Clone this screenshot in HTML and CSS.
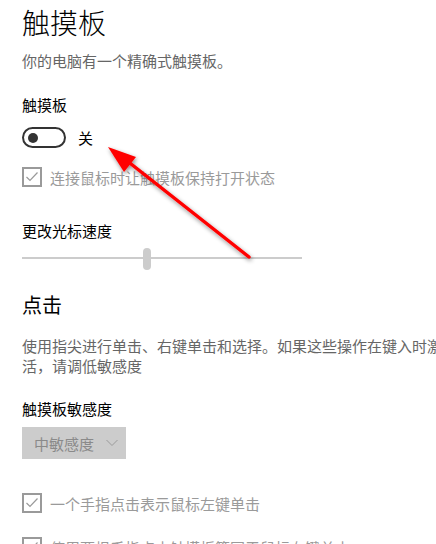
FILE: index.html
```html
<!DOCTYPE html>
<html lang="zh-CN">

<head>
    <meta charset="UTF-8">
    <meta name="viewport" content="width=device-width, initial-scale=1.0">
    <title>触摸板</title>

    <link rel="stylesheet" href="styles.css">
</head>

<body>
    <div class="page">
        <h1>触摸板</h1>
        <p class="subtitle">你的电脑有一个精确式触摸板。</p>

        <p class="label label-touchpad">触摸板</p>
        <div class="toggle-row">
            <span class="toggle"><span class="knob"></span></span>
            <span class="toggle-text">关</span>
        </div>

        <div class="check-row check-first">
            <svg class="checkbox" width="20" height="20" viewBox="0 0 20 20">
                <rect x="1" y="1" width="18" height="18" fill="none" stroke="#9a9a9a" stroke-width="2" />
                <polyline points="4.5,10 8,13.5 15.5,5.5" fill="none" stroke="#9a9a9a" stroke-width="1.2" />
            </svg>
            <span class="check-text">连接鼠标时让触摸板保持打开状态</span>
        </div>

        <p class="label label-speed">更改光标速度</p>
        <div class="slider">
            <span class="track"></span>
            <span class="thumb"></span>
        </div>

        <h2>点击</h2>
        <p class="desc">使用指尖进行单击、右键单击和选择。如果这些操作在键入时激活，请调低敏感度</p>

        <p class="label label-sens">触摸板敏感度</p>
        <div class="dropdown">
            <span>中敏感度</span>
            <svg class="chevron" width="12" height="8" viewBox="0 0 12 8">
                <polyline points="0.5,1 6,6.5 11.5,1" fill="none" stroke="#9a9a9a" stroke-width="1" />
            </svg>
        </div>

        <div class="check-row check-second">
            <svg class="checkbox" width="20" height="20" viewBox="0 0 20 20">
                <rect x="1" y="1" width="18" height="18" fill="none" stroke="#9a9a9a" stroke-width="2" />
                <polyline points="4.5,10 8,13.5 15.5,5.5" fill="none" stroke="#9a9a9a" stroke-width="1.2" />
            </svg>
            <span class="check-text">一个手指点击表示鼠标左键单击</span>
        </div>

        <div class="check-row check-third">
            <svg class="checkbox" width="20" height="20" viewBox="0 0 20 20">
                <rect x="1" y="1" width="18" height="18" fill="none" stroke="#9a9a9a" stroke-width="2" />
                <polyline points="4.5,10 8,13.5 15.5,5.5" fill="none" stroke="#9a9a9a" stroke-width="1.2" />
            </svg>
            <span class="check-text">使用两根手指点击触摸板等同于鼠标右键单击</span>
        </div>
    </div>

    <!-- red annotation arrow drawn over the screenshot -->
    <svg class="arrow" width="436" height="544" viewBox="0 0 436 544">
        <defs>
            <filter id="shadow" x="-20%" y="-20%" width="140%" height="140%">
                <feDropShadow dx="1" dy="2" stdDeviation="2" flood-color="#000" flood-opacity="0.45" />
            </filter>
        </defs>
        <g filter="url(#shadow)">
            <line x1="249" y1="257" x2="126" y2="160" stroke="#ff0000" stroke-width="3.5" stroke-linecap="round" />
            <polygon points="108,147 136,157 124,172" fill="#ff0000" />
        </g>
    </svg>
</body>

</html>
```

FILE: styles.css
```css
body {
    font-family: "Noto Sans CJK SC", "Noto Sans", sans-serif;
    margin: 0;
    padding: 0;
    background-color: #fff;
    color: #000;
    overflow: hidden;
    width: 436px;
    height: 544px;
    position: relative;
}

.page {
    padding-left: 22px;
    width: 430px;
}

h1 {
    font-size: 28px;
    font-weight: 300;
    line-height: 36px;
    margin: 4px 0 0;
}

h2 {
    font-size: 20px;
    font-weight: 400;
    line-height: 28px;
    margin: 21px 0 0;
}

p {
    margin: 0;
}

.subtitle {
    font-size: 15px;
    line-height: 20px;
    color: #666;
    margin-top: 11px;
}

.label {
    font-size: 15px;
    line-height: 20px;
}

.label-touchpad {
    margin-top: 24px;
}

.label-speed {
    margin-top: 34px;
}

.label-sens {
    margin-top: 23px;
}

.toggle-row {
    display: flex;
    align-items: center;
    gap: 12px;
    margin-top: 12px;
    height: 21px;
}

.toggle {
    width: 44px;
    height: 21px;
    box-sizing: border-box;
    border: 2px solid #333;
    border-radius: 11px;
    display: flex;
    align-items: center;
    padding-left: 4px;
}

.knob {
    width: 10px;
    height: 10px;
    border-radius: 50%;
    background-color: #333;
}

.toggle-text {
    font-size: 15px;
}

.check-row {
    display: flex;
    align-items: center;
    gap: 8px;
    height: 20px;
}

.checkbox {
    display: block;
    flex: none;
}

.check-text {
    font-size: 15px;
    color: #9a9a9a;
    white-space: nowrap;
}

.check-first {
    margin-top: 19px;
}

.check-second {
    margin-top: 34px;
}

.check-third {
    margin-top: 24px;
}

.slider {
    position: relative;
    width: 280px;
    height: 22px;
    margin-top: 7px;
}

.track {
    position: absolute;
    left: 0;
    right: 0;
    top: 9px;
    height: 2px;
    background-color: #ccc;
}

.thumb {
    position: absolute;
    left: 121px;
    top: 0;
    width: 8px;
    height: 22px;
    border-radius: 4px;
    background-color: #ccc;
}

.desc {
    font-size: 15px;
    line-height: 20px;
    color: #666;
    margin-top: 17px;
}

.dropdown {
    display: flex;
    align-items: center;
    gap: 12px;
    width: 104px;
    height: 32px;
    box-sizing: border-box;
    padding-left: 12px;
    margin-top: 8px;
    background-color: #ccc;
    color: #8a8a8a;
    font-size: 15px;
}

.chevron {
    display: block;
}

.arrow {
    position: absolute;
    left: 0;
    top: 0;
    pointer-events: none;
}
```
